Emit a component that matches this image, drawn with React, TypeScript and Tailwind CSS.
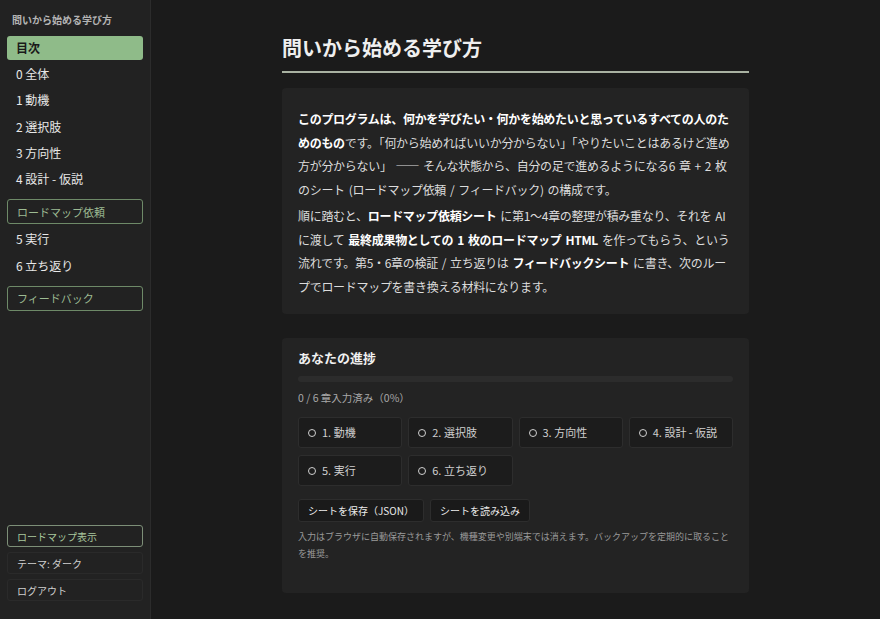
const chapters = [
  { label: '0 全体' },
  { label: '1 動機' },
  { label: '2 選択肢' },
  { label: '3 方向性' },
  { label: '4 設計 - 仮説' },
];

const later = [{ label: '5 実行' }, { label: '6 立ち返り' }];

const progress = ['1. 動機', '2. 選択肢', '3. 方向性', '4. 設計 - 仮説', '5. 実行', '6. 立ち返り'];

function SideLink({ label }: { label: string }) {
  return <div className="flex h-[26.25px] items-center px-[9px] text-[12px] text-[#e8e8e8]">{label}</div>;
}

function SideBox({ label }: { label: string }) {
  return (
    <div className="mt-[7px] mb-[2px] flex h-[25px] items-center rounded-[3px] border border-[#6e8a68] px-[9px] text-[11px] text-[#9dbb93]">
      {label}
    </div>
  );
}

export default function App() {
  return (
    <div
      className="flex h-screen overflow-hidden bg-[#1b1b1b] text-[#e6e6e6]"
      style={{ fontFamily: '"Noto Sans CJK JP", "Noto Sans", sans-serif' }}
    >
      <aside className="flex w-[151px] shrink-0 flex-col border-r border-[#2c2c2c] bg-[#222222] px-[7px] pb-[18px]">
        <div className="h-[36px] pl-[5px] pt-[13px] text-[10px] leading-[14px] font-bold text-[#b4b4b4]">問いから始める学び方</div>
        <div className="mb-[1px] flex h-[24px] items-center rounded-[3px] bg-[#8fbb89] px-[9px] text-[12px] font-bold text-[#1a1a1a]">
          目次
        </div>
        {chapters.map((c) => (
          <SideLink key={c.label} label={c.label} />
        ))}
        <SideBox label="ロードマップ依頼" />
        {later.map((c) => (
          <SideLink key={c.label} label={c.label} />
        ))}
        <SideBox label="フィードバック" />
        <div className="mt-auto flex flex-col gap-[5px]">
          <div className="flex h-[22px] items-center rounded-[3px] border border-[#7d8f78] px-[9px] text-[10px] text-[#a8c79d]">
            ロードマップ表示
          </div>
          <div className="flex h-[22px] items-center rounded-[3px] border border-[#2a2a2a] px-[9px] text-[10px] text-[#d0d0d0]">
            テーマ: ダーク
          </div>
          <div className="flex h-[22px] items-center rounded-[3px] border border-[#2a2a2a] px-[9px] text-[10px] text-[#d0d0d0]">
            ログアウト
          </div>
        </div>
      </aside>

      <main className="flex-1 overflow-hidden">
        <div className="mx-auto w-[467px] pt-[34px]">
          <h1 className="border-b-2 border-[#a9b2a2] pb-[9px] text-[20px] font-bold leading-[28px] text-[#efefef]">
            問いから始める学び方
          </h1>

          <section className="mt-[15px] rounded-[4px] bg-[#232323] px-4 pt-[19px] pb-[16px] text-[12px] leading-[23.5px] tracking-[-0.3px] [word-spacing:1.5px] text-[#dcdcdc]">
            <p>
              <b className="text-white">このプログラムは、何かを学びたい・何かを始めたいと思っているすべての人のためのもの</b>
              です。「何から始めればいいか分からない」「やりたいことはあるけど進め方が分からない」 ―― そんな状態から、自分の足で進めるようになる6 章 + 2 枚のシート (ロードマップ依頼 / フィードバック) の構成です。
            </p>
            <p className="mt-[3px]">
              順に踏むと、<b className="text-white">ロードマップ依頼シート</b> に第1〜4章の整理が積み重なり、それを AI に渡して{' '}
              <b className="text-white">最終成果物としての 1 枚のロードマップ HTML</b> を作ってもらう、という流れです。第5・6章の検証 / 立ち返りは{' '}
              <b className="text-white">フィードバックシート</b> に書き、次のループでロードマップを書き換える材料になります。
            </p>
          </section>

          <section className="mt-[24px] rounded-[4px] bg-[#232323] px-4 pt-[10px] pb-[31px]">
            <h2 className="text-[13px] font-bold leading-[20px] text-[#f0f0f0]">あなたの進捗</h2>
            <div className="mt-[8px] h-[6px] rounded-full bg-[#2c2c2c]" />
            <div className="mt-[8px] text-[10.5px] leading-[16px] text-[#a8a8a8]">0 / 6 章入力済み（0%）</div>
            <div className="mt-[11px] grid grid-cols-4 gap-x-[6px] gap-y-[7px]">
              {progress.map((p) => (
                <div
                  key={p}
                  className="flex h-[31px] items-center gap-[6px] rounded-[3px] border border-[#2d2d2d] bg-[#1c1c1c] px-[9px] text-[11px] text-[#cfcfcf]"
                >
                  <span className="h-[8px] w-[8px] rounded-full border-[1.5px] border-[#cfcfcf]" />
                  {p}
                </div>
              ))}
            </div>
            <div className="mt-[13px] flex gap-[6px]">
              <button className="h-[23px] rounded-[3px] border border-[#2d2d2d] bg-[#1a1a1a] px-[9px] text-[10px] text-[#ececec]">
                シートを保存（JSON）
              </button>
              <button className="h-[23px] rounded-[3px] border border-[#2d2d2d] bg-[#1a1a1a] px-[9px] text-[10px] text-[#ececec]">
                シートを読み込み
              </button>
            </div>
            <p className="mt-[6px] text-[9px] leading-[17px] text-[#9a9a9a]">
              入力はブラウザに自動保存されますが、機種変更や別端末では消えます。バックアップを定期的に取ることを推奨。
            </p>
          </section>
        </div>
      </main>
    </div>
  );
}
